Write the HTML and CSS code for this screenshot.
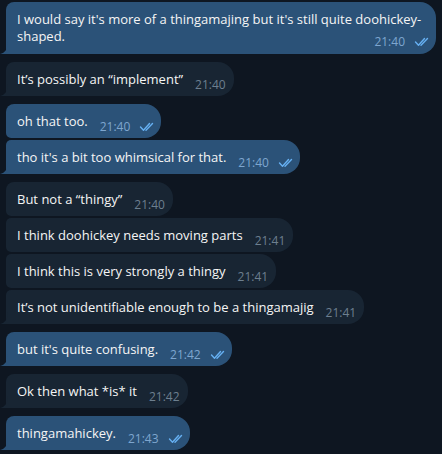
FILE: index.html
```html
<!DOCTYPE html>
<html>
<head>
<meta charset="utf-8">
<link rel="stylesheet" href="styles.css">
</head>
<body>
<div class="chat">
  <div class="group">
    <div class="msg out tail multi"><div class="bubble">I would say it's more of a thingamajing but it's still quite doohickey-shaped.<span class="meta"><span class="time">21:40</span><svg class="checks" viewBox="0 0 16 10"><path d="M1.5 5 L4.5 8.2 L10.5 1.5"/><path d="M7 8.2 L13.5 1.5"/></svg></span><svg class="tailsvg" viewBox="0 0 8 12"><path d="M8 0 C8 7 5 11 0 12 L8 12 Z"/></svg></div></div>
  </div>
  <div class="group">
    <div class="msg in tail"><div class="bubble">It’s possibly an “implement”<span class="meta"><span class="time">21:40</span></span><svg class="tailsvg" viewBox="0 0 8 12"><path d="M8 0 C8 7 5 11 0 12 L8 12 Z"/></svg></div></div>
  </div>
  <div class="group">
    <div class="msg out"><div class="bubble">oh that too.<span class="meta"><span class="time">21:40</span><svg class="checks" viewBox="0 0 16 10"><path d="M1.5 5 L4.5 8.2 L10.5 1.5"/><path d="M7 8.2 L13.5 1.5"/></svg></span></div></div>
    <div class="msg out tail mid"><div class="bubble">tho it's a bit too whimsical for that.<span class="meta"><span class="time">21:40</span><svg class="checks" viewBox="0 0 16 10"><path d="M1.5 5 L4.5 8.2 L10.5 1.5"/><path d="M7 8.2 L13.5 1.5"/></svg></span><svg class="tailsvg" viewBox="0 0 8 12"><path d="M8 0 C8 7 5 11 0 12 L8 12 Z"/></svg></div></div>
  </div>
  <div class="group">
    <div class="msg in"><div class="bubble">But not a “thingy”<span class="meta"><span class="time">21:40</span></span></div></div>
    <div class="msg in mid"><div class="bubble">I think doohickey needs moving parts<span class="meta"><span class="time">21:41</span></span></div></div>
    <div class="msg in mid"><div class="bubble">I think this is very strongly a thingy<span class="meta"><span class="time">21:41</span></span></div></div>
    <div class="msg in tail mid"><div class="bubble">It’s not unidentifiable enough to be a thingamajig<span class="meta"><span class="time">21:41</span></span><svg class="tailsvg" viewBox="0 0 8 12"><path d="M8 0 C8 7 5 11 0 12 L8 12 Z"/></svg></div></div>
  </div>
  <div class="group">
    <div class="msg out tail"><div class="bubble">but it's quite confusing.<span class="meta"><span class="time">21:42</span><svg class="checks" viewBox="0 0 16 10"><path d="M1.5 5 L4.5 8.2 L10.5 1.5"/><path d="M7 8.2 L13.5 1.5"/></svg></span><svg class="tailsvg" viewBox="0 0 8 12"><path d="M8 0 C8 7 5 11 0 12 L8 12 Z"/></svg></div></div>
  </div>
  <div class="group">
    <div class="msg in tail"><div class="bubble">Ok then what *is* it<span class="meta"><span class="time">21:42</span></span><svg class="tailsvg" viewBox="0 0 8 12"><path d="M8 0 C8 7 5 11 0 12 L8 12 Z"/></svg></div></div>
  </div>
  <div class="group">
    <div class="msg out tail"><div class="bubble">thingamahickey.<span class="meta"><span class="time">21:43</span><svg class="checks" viewBox="0 0 16 10"><path d="M1.5 5 L4.5 8.2 L10.5 1.5"/><path d="M7 8.2 L13.5 1.5"/></svg></span><svg class="tailsvg" viewBox="0 0 8 12"><path d="M8 0 C8 7 5 11 0 12 L8 12 Z"/></svg></div></div>
  </div>
</div>
</body>
</html>
```
FILE: styles.css
```css
html, body {
  margin: 0;
  padding: 0;
  background: #0e1621;
}
body {
  width: 442px;
  height: 454px;
  overflow: hidden;
  font-family: "Open Sans", "Noto Sans", sans-serif;
  color: #f5f5f5;
}
.chat {
  display: flex;
  flex-direction: column;
  gap: 8px;
  padding: 2px 6px 0 6px;
}
.group {
  display: flex;
  flex-direction: column;
  gap: 2px;
}
.msg {
  display: flex;
}
.bubble {
  position: relative;
  max-width: 100%;
  box-sizing: border-box;
  padding: 9px 8px 8px 11px;
  font-size: 13px;
  line-height: 17px;
  border-radius: 8px 16px 16px 5px;
  display: flow-root;
}
.msg.multi .bubble {
  padding-bottom: 9px;
}
.msg.mid .bubble {
  border-top-left-radius: 5px;
}
.msg.tail .bubble {
  border-bottom-left-radius: 0;
}
.out .bubble {
  background: #2b5278;
}
.in .bubble {
  background: #182533;
}
.meta {
  float: right;
  display: flex;
  align-items: center;
  margin: 7px 0 -3px 12px;
  height: 13px;
  font-size: 12px;
  line-height: 13px;
}
.in .time {
  color: #6d7f8f;
}
.out .time {
  color: #7ea6cf;
}
.checks {
  width: 16px;
  height: 10px;
  margin-left: 9px;
  margin-right: -2px;
  fill: none;
  stroke: #66b0f2;
  stroke-width: 1.4;
  stroke-linecap: round;
  stroke-linejoin: round;
}
.tailsvg {
  position: absolute;
  left: -6px;
  bottom: 0;
  width: 8px;
  height: 12px;
}
.out .tailsvg {
  fill: #2b5278;
}
.in .tailsvg {
  fill: #182533;
}
```
